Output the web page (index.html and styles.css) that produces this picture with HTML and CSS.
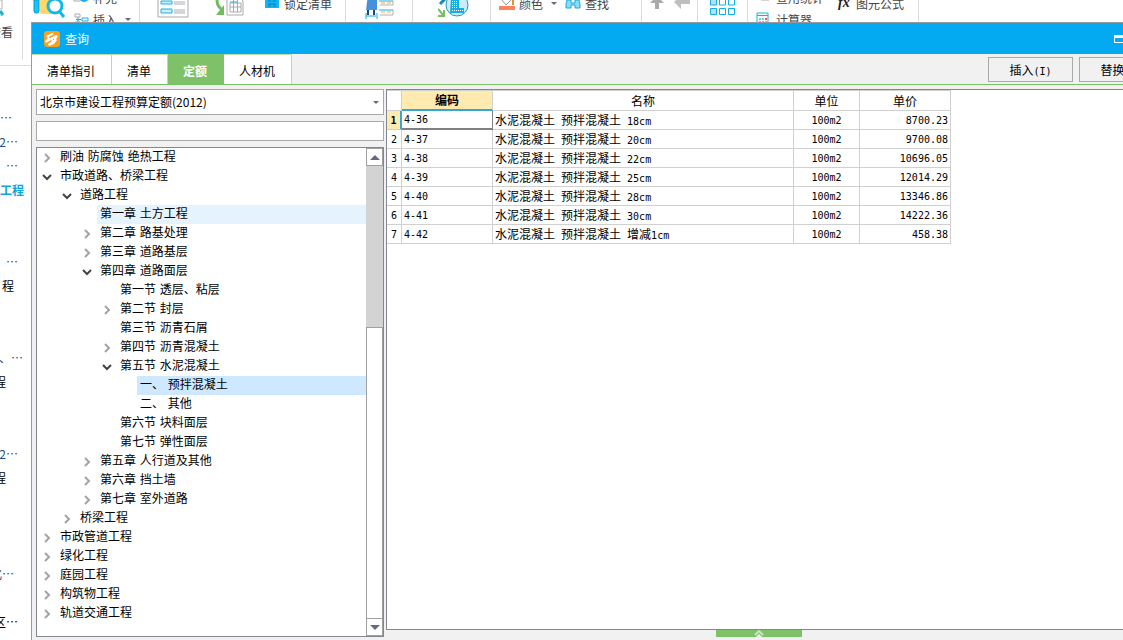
FILE: index.html
```
<!DOCTYPE html>
<html lang="zh-CN">
<head>
    <meta charset="UTF-8">
    <title>查询</title>
    <meta name="viewport" content="width=device-width, initial-scale=1.0">
    <link rel="stylesheet" href="styles.css">
</head>
<body>
    <svg class="defs" aria-hidden="true">
        <symbol id="closed" viewBox="0 0 8 10"><path d="M2 1l4 4-4 4" fill="none" stroke="#a3a3a3" stroke-width="2"/></symbol>
        <symbol id="open" viewBox="0 0 10 8"><path d="M1 2l4 4 4-4" fill="none" stroke="#444" stroke-width="2"/></symbol>
    </svg>

    <header class="ribbon">
        <div class="group g-view">
            <svg width="5" height="22" viewBox="0 0 5 22"><path d="M0 0h2v9H0" fill="none" stroke="#b5b5b5"/><path d="M0 11l3 4" stroke="#12b3dc" stroke-width="3"/></svg>
            <span>查看</span>
        </div>
        <div class="group g-insert">
            <svg width="32" height="20" viewBox="0 0 32 20">
                <path d="M1 0h5v11q0 2-2 2H3q-2 0-2-2z" fill="#12c4ff" stroke="#079ccd"/>
                <path d="M7 0h12v14H9q-2 0-2-2z" fill="#ffd86b"/>
                <circle cx="22" cy="6" r="7" fill="#fff" stroke="#13b7e8" stroke-width="3"/>
                <path d="M26 11l5 6" stroke="#13b7e8" stroke-width="3"/>
            </svg>
            <div class="col">
                <span class="item"><svg width="16" height="12" viewBox="0 0 16 12"><path d="M1 4v6h6" fill="none" stroke="#aaa"/><circle cx="11" cy="6" r="5" fill="#12aee8"/><path d="M11 4v5" stroke="#fff" stroke-width="2"/></svg>补充</span>
                <span class="item"><svg width="16" height="12" viewBox="0 0 16 12"><path d="M2 1h5v3H2zM2 9h5v3H2z" fill="none" stroke="#aaa"/><path d="M3 6.500h5M5 4v5" stroke="#12aee8"/><path d="M9 5h6v3H9z" fill="none" stroke="#12aee8"/></svg>插入<i class="caret"></i></span>
            </div>
        </div>
        <div class="group g-lock">
            <svg width="32" height="18" viewBox="0 0 32 18">
                <path d="M1 -2h30v19H1z" fill="#fff" stroke="#aaa"/>
                <path d="M4 1h11v3H4zM4 9h11v4H4z" fill="#c9eefb" stroke="#18b4e0"/>
                <path d="M17 1h11v4H17zM17 9h11v5H17z" fill="#d6d6da"/>
            </svg>
            <svg width="30" height="17" viewBox="0 0 30 17">
                <path d="M2 0q0 7 6 10" fill="none" stroke="#6fbd5c" stroke-width="3"/><path d="M9 5v10H1z" fill="#6fbd5c"/>
                <path d="M12 -3h12l4 4v14H12z" fill="#fff" stroke="#aaa"/>
                <path d="M15 3h11v9H15zM15 7h11M18.500 0v12M22.500 0v12" fill="none" stroke="#aaa"/><path d="M15 2h8" stroke="#25b6df"/>
            </svg>
            <span class="item"><svg width="14" height="10" viewBox="0 0 14 10"><path d="M0 0h14v10H0z" fill="#10b5f2"/><path d="M3 3h3M8 3h3M3 6h8M3 8h3M8 8h3" stroke="#0780ba"/></svg>锁定清单</span>
        </div>
        <div class="group g-sum">
            <svg width="30" height="20" viewBox="0 0 30 20">
                <path d="M2 2q0-4 5-4h5v12H1z" fill="#4591dc"/><path d="M3 10v5M9 10v5" stroke="#134b7d" stroke-width="2"/><path d="M1 16h10M1 13v6M12 13v6" stroke="#12aee8"/>
                <path d="M15 5h13V1M15 15h13v-5" fill="none" stroke="#b0b0b0"/><path d="M14 1h14M14 10h14" stroke="#12aee8"/><path d="M16 3h4M22 3h4M16 12h4M22 12h4" stroke="#f3a43a"/>
            </svg>
        </div>
        <div class="group g-globe">
            <svg width="31" height="18" viewBox="0 0 31 18">
                <path d="M2 4l6-6" stroke="#1588b8" stroke-width="3"/><path d="M0 9l6 7M6 10v6H0" fill="none" stroke="#76bd66" stroke-width="2"/>
                <circle cx="19" cy="5" r="11" fill="#cdebf8" stroke="#169fc8"/>
                <path d="M13 -1h8v9h5v5H12z" fill="#12aee8"/><path d="M14 1.500h6M14 3.500h6M14 5.500h6M14 7.500h6M14 10.500h11" stroke="#fff" stroke-dasharray="1 1"/>
            </svg>
        </div>
        <div class="group g-find">
            <svg width="16" height="10" viewBox="0 0 16 10"><path d="M3 0l4 5 5-5" fill="none" stroke="#999"/><path d="M14 0v5" stroke="#e79135" stroke-width="2"/><path d="M0 6h16v4H0z" fill="#fb8358"/></svg>
            <span class="item">颜色<i class="caret"></i></span>
            <svg width="16" height="9" viewBox="0 0 16 9"><path d="M2 0h4v3h4V0h4l1 4v4h-5V5H6v3H1V4z" fill="#8fdbf4" stroke="#14ace0"/></svg>
            <span class="item">查找</span>
        </div>
        <div class="group g-move">
            <svg width="14" height="9" viewBox="0 0 14 9"><path d="M0 3l3-3h8l3 3H9v6H5V3z" fill="#aaa"/></svg>
            <svg width="17" height="9" viewBox="0 0 17 9"><path d="M0 2l7-7v4h9v5H7v5z" fill="#bfbfbf"/></svg>
        </div>
        <div class="group g-grid">
            <svg width="26" height="16" viewBox="0 0 26 16"><g fill="#fff" stroke="#0db2e5"><path d="M.5-1h6v6h-6zM.5 8.500h6v6h-6z" fill="#bedcf0"/><path d="M9.500-1h6v6h-6zM9.500 8.500h6v6h-6zM18.500-1h6v6h-6zM18.500 8.500h6v6h-6z"/></g></svg>
        </div>
        <div class="group g-calc">
            <div class="col">
                <span class="item"><svg width="14" height="12" viewBox="0 0 14 12"><path d="M5 0h8v9H5z" fill="#ddd" stroke="#aaa"/></svg>查用统计</span>
                <span class="item"><svg width="14" height="14" viewBox="0 0 14 14"><path d="M1 1h11v13H1z" fill="#fff" stroke="#10b2e8"/><path d="M1 3.500h11" stroke="#10b2e8"/><path d="M3 7h2M6 7h2M3 10h2M6 10h2M9 10h2" stroke="#167ec0"/><path d="M9 7h2" stroke="#f25b45" stroke-width="2"/></svg>计算器</span>
            </div>
            <span class="item"><b class="fx">fx</b>图元公式</span>
        </div>
    </header>

    <ul class="sidelist">
        <li class="e12">…</li>
        <li class="e18">2…</li>
        <li class="e18">…</li>
        <li class="e24 current">工程</li>
        <li></li>
        <li></li>
        <li class="e18">…</li>
        <li class="e14 leaf">程</li>
        <li></li>
        <li></li>
        <li class="e23">、…</li>
        <li class="e6 leaf">程</li>
        <li></li>
        <li></li>
        <li class="e18">2…</li>
        <li class="e6 leaf">程</li>
        <li></li>
        <li></li>
        <li></li>
        <li class="e14">化…</li>
        <li></li>
        <li class="e18 leaf">区…</li>
    </ul>

    <section class="dialog">
        <div class="titlebar">
            <svg width="16" height="16" viewBox="0 0 16 16"><rect width="16" height="16" rx="3" fill="#f8a01c"/><path d="M2 5l6-3 2 1-5 3 1 1 6-3 2 1-2 3 1 1-3 4-5 2-1-2 4-3-1-1-5 3-1-2 3-3z" fill="#fff"/><path d="M5 6l2 1M9 8l1 1" stroke="#f8a01c"/></svg>
            <h1>查询</h1>
            <button class="maximize" aria-label="最大化"></button>
        </div>

        <nav class="tabs">
            <button class="tab">清单指引</button>
            <button class="tab">清单</button>
            <button class="tab active">定额</button>
            <button class="tab">人材机</button>
            <div class="actions">
                <button>插入<span class="en">(I)</span></button>
                <button>替换<span class="en">(R)</span></button>
            </div>
        </nav>

        <div class="content">
            <div class="left">
                <div class="picker">
                    <select aria-label="定额库">
                        <option>北京市建设工程预算定额(2012)</option>
                    </select>
                    <i class="caret"></i>
                </div>
                <input class="search" type="text" aria-label="搜索">
                <div class="treebox">
                    <ul class="tree">
                        <li><div class="row"><button><svg width="8" height="10"><use href="#closed"/></svg></button><span>刷油 防腐蚀 绝热工程</span></div></li>
                        <li><div class="row"><button><svg width="10" height="8"><use href="#open"/></svg></button><span>市政道路、桥梁工程</span></div>
                            <ul>
                                <li><div class="row"><button><svg width="10" height="8"><use href="#open"/></svg></button><span>道路工程</span></div>
                                    <ul>
                                        <li><div class="row"><i></i><span class="hover">第一章 土方工程</span></div></li>
                                        <li><div class="row"><button><svg width="8" height="10"><use href="#closed"/></svg></button><span>第二章 路基处理</span></div></li>
                                        <li><div class="row"><button><svg width="8" height="10"><use href="#closed"/></svg></button><span>第三章 道路基层</span></div></li>
                                        <li><div class="row"><button><svg width="10" height="8"><use href="#open"/></svg></button><span>第四章 道路面层</span></div>
                                            <ul>
                                                <li><div class="row"><i></i><span>第一节 透层、粘层</span></div></li>
                                                <li><div class="row"><button><svg width="8" height="10"><use href="#closed"/></svg></button><span>第二节 封层</span></div></li>
                                                <li><div class="row"><i></i><span>第三节 沥青石屑</span></div></li>
                                                <li><div class="row"><button><svg width="8" height="10"><use href="#closed"/></svg></button><span>第四节 沥青混凝土</span></div></li>
                                                <li><div class="row"><button><svg width="10" height="8"><use href="#open"/></svg></button><span>第五节 水泥混凝土</span></div>
                                                    <ul>
                                                        <li><div class="row"><i></i><span class="selected">一、 预拌混凝土</span></div></li>
                                                        <li><div class="row"><i></i><span>二、 其他</span></div></li>
                                                    </ul>
                                                </li>
                                                <li><div class="row"><i></i><span>第六节 块料面层</span></div></li>
                                                <li><div class="row"><i></i><span>第七节 弹性面层</span></div></li>
                                            </ul>
                                        </li>
                                        <li><div class="row"><button><svg width="8" height="10"><use href="#closed"/></svg></button><span>第五章 人行道及其他</span></div></li>
                                        <li><div class="row"><button><svg width="8" height="10"><use href="#closed"/></svg></button><span>第六章 挡土墙</span></div></li>
                                        <li><div class="row"><button><svg width="8" height="10"><use href="#closed"/></svg></button><span>第七章 室外道路</span></div></li>
                                    </ul>
                                </li>
                                <li><div class="row"><button><svg width="8" height="10"><use href="#closed"/></svg></button><span>桥梁工程</span></div></li>
                            </ul>
                        </li>
                        <li><div class="row"><button><svg width="8" height="10"><use href="#closed"/></svg></button><span>市政管道工程</span></div></li>
                        <li><div class="row"><button><svg width="8" height="10"><use href="#closed"/></svg></button><span>绿化工程</span></div></li>
                        <li><div class="row"><button><svg width="8" height="10"><use href="#closed"/></svg></button><span>庭园工程</span></div></li>
                        <li><div class="row"><button><svg width="8" height="10"><use href="#closed"/></svg></button><span>构筑物工程</span></div></li>
                        <li><div class="row"><button><svg width="8" height="10"><use href="#closed"/></svg></button><span>轨道交通工程</span></div></li>
                    </ul>
                    <div class="scrollbar">
                        <button aria-label="向上"><svg width="10" height="5" viewBox="0 0 10 5"><path d="M5 0l5 5H0z" fill="#646a7c"/></svg></button>
                        <div class="track"></div>
                        <div class="thumb"></div>
                        <button aria-label="向下"><svg width="10" height="5" viewBox="0 0 10 5"><path d="M0 0h10L5 5z" fill="#646a7c"/></svg></button>
                    </div>
                </div>
            </div>

            <div class="right">
                <div class="sheet">
                    <table>
                        <colgroup><col class="c-no"><col class="c-code"><col class="c-name"><col class="c-unit"><col class="c-price"></colgroup>
                        <thead>
                            <tr><th></th><th class="sorted">编码</th><th>名称</th><th>单位</th><th>单价</th></tr>
                        </thead>
                        <tbody>
                            <tr class="active"><th>1</th><td>4-36</td><td>水泥混凝土<span class="en"> </span>预拌混凝土<span class="en"> 18cm</span></td><td>100m2</td><td>8700.23</td></tr>
                            <tr><th>2</th><td>4-37</td><td>水泥混凝土<span class="en"> </span>预拌混凝土<span class="en"> 20cm</span></td><td>100m2</td><td>9700.08</td></tr>
                            <tr><th>3</th><td>4-38</td><td>水泥混凝土<span class="en"> </span>预拌混凝土<span class="en"> 22cm</span></td><td>100m2</td><td>10696.05</td></tr>
                            <tr><th>4</th><td>4-39</td><td>水泥混凝土<span class="en"> </span>预拌混凝土<span class="en"> 25cm</span></td><td>100m2</td><td>12014.29</td></tr>
                            <tr><th>5</th><td>4-40</td><td>水泥混凝土<span class="en"> </span>预拌混凝土<span class="en"> 28cm</span></td><td>100m2</td><td>13346.86</td></tr>
                            <tr><th>6</th><td>4-41</td><td>水泥混凝土<span class="en"> </span>预拌混凝土<span class="en"> 30cm</span></td><td>100m2</td><td>14222.36</td></tr>
                            <tr><th>7</th><td>4-42</td><td>水泥混凝土<span class="en"> </span>预拌混凝土<span class="en"> </span>增减<span class="en">1cm</span></td><td>100m2</td><td>458.38</td></tr>
                        </tbody>
                    </table>
                </div>
                <button class="expand" aria-label="展开"><svg width="10" height="7" viewBox="0 0 10 7"><path d="M1 5l4-4 4 4" fill="none" stroke="#c9e8bf" stroke-width="2"/><path d="M5 4l3 3H2z" fill="#fff"/></svg></button>
            </div>
        </div>
    </section>
</body>
</html>
```
FILE: styles.css
```
* {
    box-sizing: border-box;
}
body {
    margin: 0;
    height: 100vh;
    overflow: hidden;
    position: relative;
    background: #fff;
    color: #000;
    font-family: "Noto Sans CJK SC", sans-serif;
    font-size: 12px;
    line-height: 19px;
}
ul {
    list-style: none;
    margin: 0;
    padding: 0;
}
button {
    font: inherit;
    color: inherit;
    padding: 0;
    border: 0;
    background: none;
}
svg {
    display: block;
    flex: none;
}
.defs {
    position: absolute;
    width: 0;
    height: 0;
}
.en {
    font-family: "DejaVu Sans Mono", monospace;
    font-size: 10px;
    line-height: 10px;
    white-space: pre;
}
.caret {
    border: 3px solid transparent;
    border-top-color: #646a7c;
    border-bottom: 0;
}

/* toolbar behind the dialog */
.ribbon {
    display: flex;
    height: 66px;
    overflow: hidden;
    border-bottom: 1px solid #dcdcdc;
    color: #444;
}
.group {
    display: flex;
    flex: none;
    align-items: flex-start;
    height: 60px;
    border-right: 1px solid #dcdcdc;
}
.item {
    display: flex;
    align-items: center;
    height: 22px;
    margin-top: -8px;
    gap: 4px;
    white-space: nowrap;
}
.col .item + .item {
    margin-top: 0;
}
.col .item:first-child {
    margin-top: -14px;
}
.g-view {
    width: 23px;
    flex-direction: column;
}
.g-view span {
    width: 13px;
    display: flex;
    justify-content: flex-end;
    white-space: nowrap;
}
.g-insert {
    width: 117px;
    padding-left: 10px;
    gap: 8px;
}
.g-insert .caret {
    margin-left: 4px;
}
.g-lock {
    width: 206px;
    padding-left: 17px;
    gap: 26px;
}
.g-lock .item {
    gap: 5px;
    margin-left: -6px;
}
.g-sum {
    width: 67px;
    padding-left: 19px;
}
.g-globe {
    width: 78px;
    padding-left: 25px;
}
.g-find {
    width: 151px;
    padding-left: 8px;
    gap: 4px;
}
.g-find .caret {
    margin: 0 4px;
}
.g-move {
    width: 56px;
    padding-left: 8px;
    gap: 10px;
}
.g-grid {
    width: 50px;
    padding-left: 12px;
}
.g-calc {
    width: 171px;
    padding-left: 8px;
    gap: 14px;
}
.g-calc .col .item {
    gap: 6px;
}
.fx {
    width: 14px;
    font: italic bold 14px "Liberation Serif", serif;
    color: #222;
}

/* clipped project list at the left edge */
.sidelist {
    width: 31px;
    padding-top: 40px;
    color: #17508c;
    line-height: 24px;
}
.sidelist li {
    display: flex;
    justify-content: flex-end;
    height: 24px;
    white-space: nowrap;
}
.sidelist .current {
    color: #0ca5dc;
    font-weight: bold;
}
.sidelist .leaf {
    color: #000;
}
.e6 { width: 6px; }
.e12 { width: 12px; }
.e14 { width: 14px; }
.e18 { width: 18px; }
.e23 { width: 23px; }
.e24 { width: 24px; }

/* dialog window, runs past the right edge of the screen */
.dialog {
    position: absolute;
    left: 31px;
    right: -46px;
    top: 22px;
    bottom: 0;
    display: flex;
    flex-direction: column;
    border: 1px solid #999;
    border-bottom: 0;
    background: #f1f1f1;
}
.titlebar {
    display: flex;
    align-items: center;
    flex: none;
    gap: 5px;
    height: 31px;
    padding: 0 44px 0 12px;
    background: #03a9f1;
    color: #fff;
}
.titlebar h1 {
    margin: 0;
    font-size: 12px;
    font-weight: normal;
}
.maximize {
    width: 10px;
    height: 8px;
    margin-left: auto;
    border: 1px solid #fff;
    border-top-width: 3px;
}
.tabs {
    display: flex;
    flex: none;
    height: 31px;
    border-bottom: 1px solid #7dc269;
}
.tab {
    padding: 2px 16px 0 15px;
    border-top: 1px solid #b5dfa6;
    border-right: 1px solid #b5dfa6;
    background: #fff;
}
.tab.active {
    background: #7dc269;
    border-color: #7dc269;
    color: #fff;
    font-weight: bold;
}
.actions {
    display: flex;
    gap: 6px;
    margin-left: auto;
    padding: 3px 4px;
}
.actions button {
    width: 85px;
    height: 25px;
    border: 1px solid #a9a9a9;
}
.content {
    display: flex;
    flex: 1;
    min-height: 0;
    gap: 2px;
    padding: 4px 0 0 4px;
}
.left {
    display: flex;
    flex-direction: column;
    flex: none;
    width: 348px;
    padding-bottom: 3px;
}
.picker {
    position: relative;
}
.picker select {
    display: block;
    width: 100%;
    height: 26px;
    padding: 0 3px 2px;
    appearance: none;
    border: 1px solid #a9a9a9;
    border-radius: 0;
    background: #fff;
    color: #000;
    font: inherit;
}
.picker .caret {
    position: absolute;
    right: 5px;
    top: 12px;
}
.search {
    height: 20px;
    margin: 6px 0;
    border: 1px solid #a9a9a9;
    font: inherit;
}
.treebox {
    display: flex;
    flex: 1;
    min-height: 0;
    border: 1px solid #828790;
    background: #fff;
}
.tree {
    flex: 1;
    overflow: hidden;
    font-family: "DejaVu Sans", "Noto Sans CJK SC", sans-serif;
}
.tree ul {
    padding-left: 20px;
}
.row {
    display: flex;
    height: 19px;
}
.row > button,
.row > i {
    display: flex;
    flex: none;
    align-items: center;
    justify-content: center;
    width: 20px;
}
.row > span {
    flex: 1;
    padding-left: 3px;
    line-height: 19px;
    white-space: nowrap;
}
.row .hover {
    background: #e5f3ff;
}
.row .selected {
    background: #cde8ff;
}
.scrollbar {
    display: flex;
    flex-direction: column;
    width: 17px;
    background: #d3d3d3;
}
.scrollbar button {
    display: flex;
    align-items: center;
    justify-content: center;
    height: 18px;
    border: 1px solid #a0a0a0;
    background: #fff;
}
.track {
    flex: 5;
}
.thumb {
    flex: 9;
    border: 1px solid #a0a0a0;
    border-bottom: 0;
    background: #fff;
}
.right {
    display: flex;
    flex-direction: column;
    flex: 1;
    align-items: center;
}
.sheet {
    flex: 1;
    align-self: stretch;
    border: 1px solid #828790;
    background: #fff;
}
.expand {
    display: flex;
    justify-content: center;
    width: 86px;
    height: 7px;
    margin: 0 36px 3px 0;
    background: #7dc269;
}

table {
    table-layout: fixed;
    width: 564px;
    border-collapse: separate;
    border-spacing: 0;
    border-top: 1px solid #d0d0d0;
}
.c-no { width: 15px; }
.c-code { width: 91px; }
.c-name { width: 301px; }
.c-unit { width: 66px; }
.c-price { width: 91px; }
th,
td {
    height: 19px;
    padding: 0 2px;
    border-right: 1px solid #d0d0d0;
    border-bottom: 1px solid #d0d0d0;
    font-weight: normal;
    line-height: 16px;
    white-space: nowrap;
}
thead th {
    height: 20px;
}
thead .sorted {
    background: #ffebb0;
    border-bottom: 2px solid #37a6d5;
    font-weight: bold;
}
tbody th {
    padding: 0;
}
tbody th,
td:nth-child(2),
td:nth-child(4),
td:nth-child(5) {
    padding-top: 1px;
    font-family: "DejaVu Sans Mono", monospace;
    font-size: 10px;
}
td:nth-child(4) {
    text-align: center;
}
td:nth-child(5) {
    text-align: right;
}
.active th {
    background: #ffebb0;
    border-right: 2px solid #37a6d5;
    font-weight: bold;
}
.active td:nth-child(2) {
    border-right-color: #808080;
    border-bottom: 2px solid #808080;
}
```
